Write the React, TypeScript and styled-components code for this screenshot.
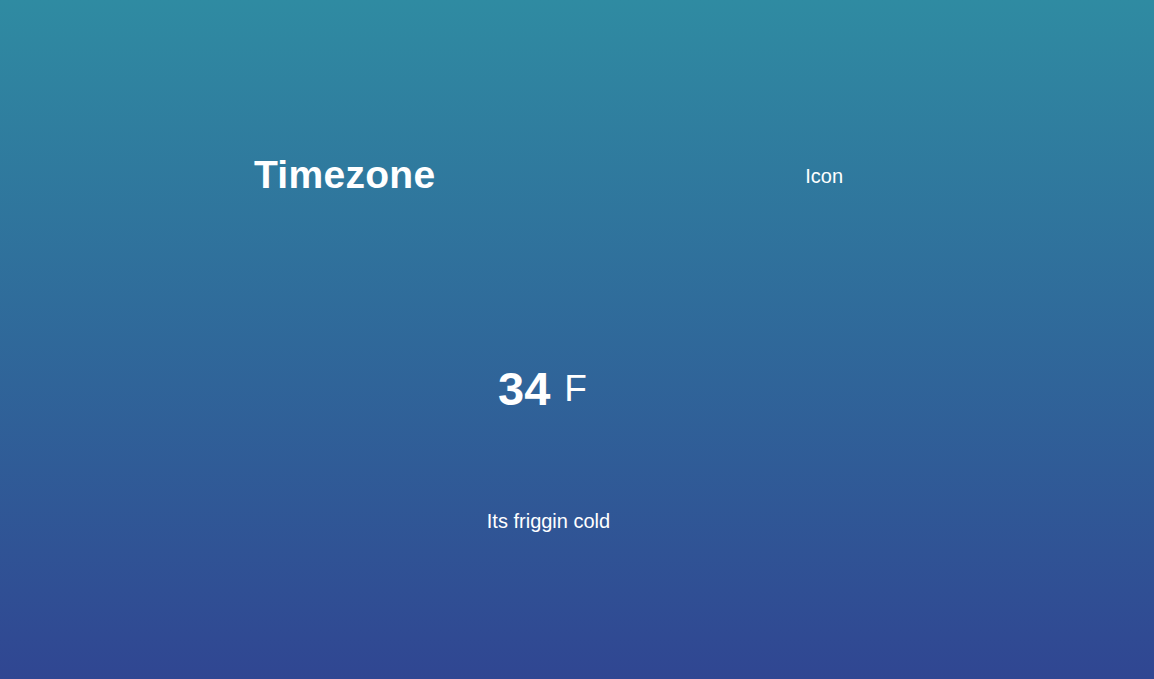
import React from "react";
import styled, { createGlobalStyle } from "styled-components";

const GlobalStyle = createGlobalStyle`
  * {
    margin: 0;
    padding: 0;
    box-sizing: border-box;
  }

  body {
    font-family: "Liberation Sans", Arial, sans-serif;
    color: white;
  }
`;

export default function App() {
  return (
    <>
      <GlobalStyle />
      <Page>
        <Column>
          <Location>
            <Timezone>Timezone</Timezone>
            <IconLabel>Icon</IconLabel>
          </Location>
          <Temperature>
            <DegreeSection>
              <Degree>34</Degree>
              <Unit>F</Unit>
            </DegreeSection>
            <Description>Its friggin cold</Description>
          </Temperature>
        </Column>
      </Page>
    </>
  );
}

const Page = styled.div`
  height: 679px;
  padding-top: 72px;

  background: linear-gradient(rgb(47, 139, 162), rgb(48, 70, 146));

  overflow: hidden;
`;

const Column = styled.div`
  width: 959px;
  margin-left: 69px;

  display: flex;
  flex-direction: column;
`;

const Location = styled.div`
  height: 204px;

  display: flex;
  justify-content: space-around;
  align-items: center;
`;

const Timezone = styled.h1`
  margin-top: 2px;

  font-size: 39px;
  font-weight: 700;
  letter-spacing: 0.3px;
`;

const IconLabel = styled.div`
  margin-top: 5px;

  font-size: 20px;
`;

const Temperature = styled.div`
  margin-top: 85px;

  display: flex;
  flex-direction: column;
  align-items: center;
  gap: 94px;
`;

const DegreeSection = styled.div`
  display: flex;
  align-items: center;

  cursor: pointer;
`;

const Degree = styled.h2`
  font-size: 47px;
  font-weight: 700;
`;

const Unit = styled.span`
  margin: 0 12px 0 14px;

  font-size: 37px;
`;

const Description = styled.div`
  font-size: 20px;
`;
